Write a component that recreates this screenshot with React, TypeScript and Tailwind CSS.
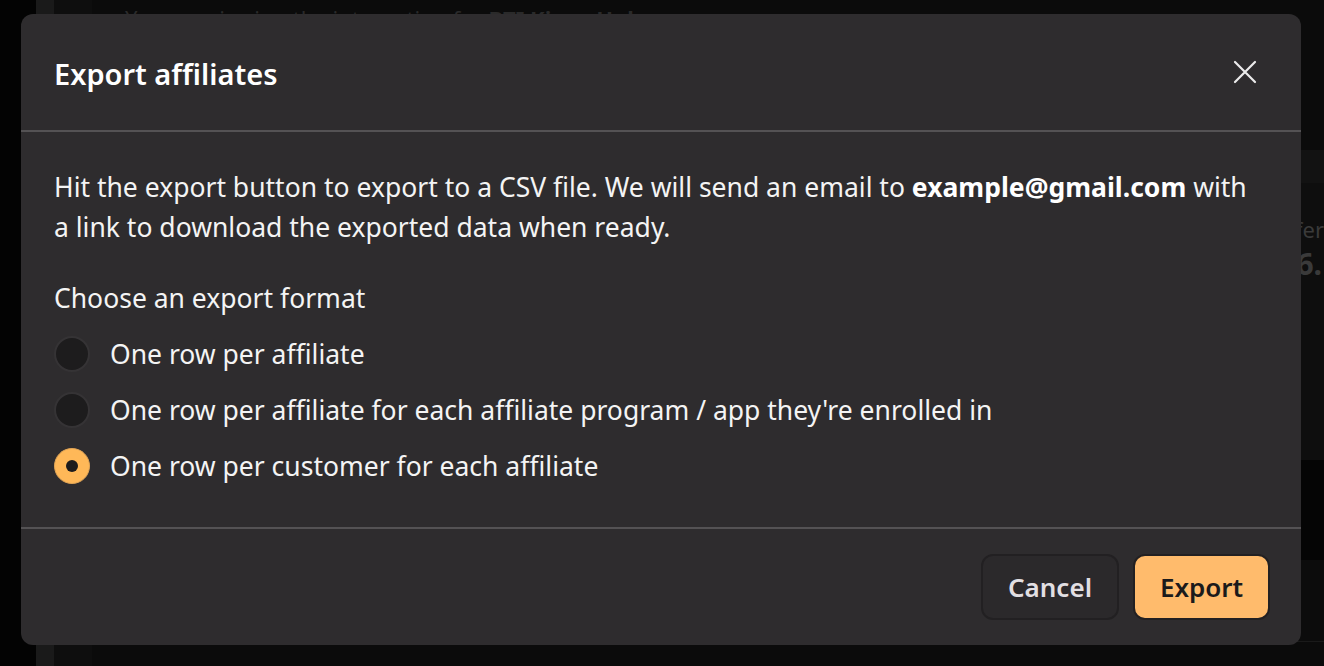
import React from "react";

const font = { fontFamily: '"Noto Sans", "Open Sans", sans-serif' };

function Radio({ checked }: { checked?: boolean }) {
  return checked ? (
    <span className="flex h-[36px] w-[36px] shrink-0 items-center justify-center rounded-full bg-[#ffb858] border border-[#e0a456]">
      <span className="h-[12px] w-[12px] rounded-full bg-[#1c1b1c]" />
    </span>
  ) : (
    <span className="h-[36px] w-[36px] shrink-0 rounded-full bg-[#1d1c1d] border-2 border-[#353335]" />
  );
}

export default function App() {
  const options = [
    { label: "One row per affiliate", checked: false },
    { label: "One row per affiliate for each affiliate program / app they're enrolled in", checked: false },
    { label: "One row per customer for each affiliate", checked: true },
  ];
  return (
    <div className="relative h-[666px] w-full overflow-hidden bg-[#0b0b0b]" style={font}>
      {/* dimmed page behind */}
      <div className="flex h-full">
        <div className="w-[36px] bg-[#030303]" />
        <div className="w-[18px] bg-[#1a1a1a]" />
        <div className="w-[38px] bg-[#0e0e0e]" />
        <div className="flex flex-1 flex-col">
          <div className="h-[150px] px-[33px] pt-[2px] text-[22px] text-[#2a2a2a]">
            You are viewing the integration for <b>BTI Kings Hub</b>
          </div>
          <div className="h-[33px] bg-[#121212]" />
          <div className="flex h-[277px] flex-col items-end overflow-hidden bg-[#0e0e0e] pt-[30px]">
            <span className="mr-0 text-[22px] text-[#3a3a3a]">offer</span>
            <span className="mr-[2px] text-[30px] font-bold leading-[36px] text-[#3a3a3a]">6.</span>
          </div>
          <div className="h-[100px] bg-[#050505]" />
          <div className="h-[82px] border-b border-[#1a1a1a] bg-[#0c0c0c]" />
          <div className="flex-1" />
        </div>
      </div>

      {/* modal */}
      <div className="absolute left-[21px] top-[14px] flex h-[631px] w-[1280px] flex-col rounded-[12px] bg-[#2e2c2e] text-[#f4f4f4]">
        <div className="flex h-[118px] items-center justify-between border-b-2 border-[#545254] pl-[33px] pr-[44px] pt-[4px]">
          <h2 className="text-[29px] font-semibold text-white">Export affiliates</h2>
          <svg width="24" height="24" viewBox="0 0 24 24" className="-mt-[4px] text-[#ebebeb]">
            <path d="M2 2 L22 22 M22 2 L2 22" stroke="currentColor" strokeWidth="2.2" strokeLinecap="round" />
          </svg>
        </div>
        <div className="flex flex-1 flex-col px-[33px] pt-[35px] text-[26.5px] leading-[40px]">
          <p className="whitespace-nowrap">
            Hit the export button to export to a CSV file. We will send an email to{" "}
            <b className="font-bold text-white">example@gmail.com</b> with
            <br />a link to download the exported data when ready.
          </p>
          <p className="mt-[31px]">Choose an export format</p>
          <div className="mt-[18px] flex flex-col gap-[20px]">
            {options.map((o) => (
              <div key={o.label} className="flex h-[36px] items-center gap-[20px]">
                <Radio checked={o.checked} />
                <span>{o.label}</span>
              </div>
            ))}
          </div>
        </div>
        <div className="flex h-[118px] items-center justify-end gap-[14px] border-t-2 border-[#545254] pr-[31px]">
          <button className="h-[66px] w-[138px] rounded-[12px] border-2 border-[#222022] bg-[#2b292b] text-[26px] font-semibold text-[#e2dfe2]">
            Cancel
          </button>
          <button className="h-[66px] w-[137px] rounded-[12px] border-2 border-[#222022] bg-[#ffbb6c] text-[26px] font-semibold text-[#1b1a1b]">
            Export
          </button>
        </div>
      </div>
    </div>
  );
}
